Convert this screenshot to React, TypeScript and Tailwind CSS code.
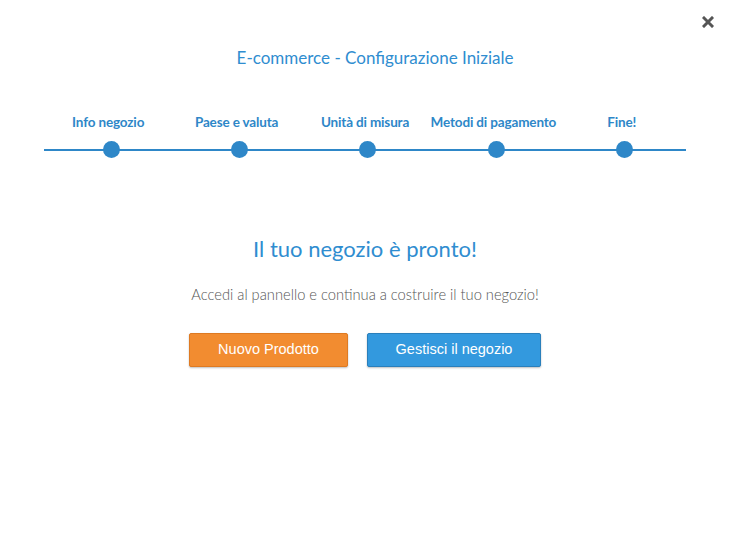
import React from "react";

const steps = ["Info negozio", "Paese e valuta", "Unità di misura", "Metodi di pagamento", "Fine!"];

export default function App() {
  return (
    <div className="w-[730px] h-[542px] bg-white relative overflow-hidden" style={{ fontFamily: "Lato, sans-serif" }}>
      <button className="absolute right-[15px] top-[15px] w-[14px] h-[14px] flex items-center justify-center">
        <svg width="12" height="12" viewBox="0 0 12 12">
          <path d="M2 2 L10 10 M10 2 L2 10" stroke="#555" strokeWidth="3" strokeLinecap="square" />
        </svg>
      </button>
      <div className="pt-[46px] pl-[20px] text-center text-[17px] text-[#2f8dd0] leading-[24px]">
        E-commerce - Configurazione Iniziale
      </div>
      <div className="relative mt-[42px] mx-[44px]">
        <div className="absolute left-0 right-0 top-[37px] h-[2px] bg-[#2e87c8]" />
        <div className="relative grid grid-cols-5 ml-[3px] mr-[-3px]">
          {steps.map((s) => (
            <div key={s} className="flex flex-col items-center">
              <div className="pr-[6px] text-[13.5px] font-bold text-[#2e87c8] leading-[20px] whitespace-nowrap tracking-[-0.15px]">{s}</div>
              <div className="mt-[9px] w-[17px] h-[17px] rounded-full bg-[#2e87c8]" />
            </div>
          ))}
        </div>
      </div>
      <div className="mt-[76px] text-center text-[22px] text-[#2f8dd0] leading-[30px]">Il tuo negozio è pronto!</div>
      <div className="mt-[20px] text-center text-[14.7px] font-light text-[#555] leading-[20px]">
        Accedi al pannello e continua a costruire il tuo negozio!
      </div>
      <div className="mt-[29px] flex justify-center gap-[19px]" style={{ fontFamily: "'Liberation Sans', Arial, sans-serif" }}>
        <button className="w-[159px] h-[34px] rounded-[2px] bg-[#f28c30] border border-[#de7a22] text-white text-[14.5px] shadow-[0_1px_2px_rgba(0,0,0,0.25)]">
          Nuovo Prodotto
        </button>
        <button className="w-[174px] h-[34px] rounded-[2px] bg-[#3399de] border border-[#2a7fbb] text-white text-[14.5px] shadow-[0_1px_2px_rgba(0,0,0,0.25)]">
          Gestisci il negozio
        </button>
      </div>
    </div>
  );
}
